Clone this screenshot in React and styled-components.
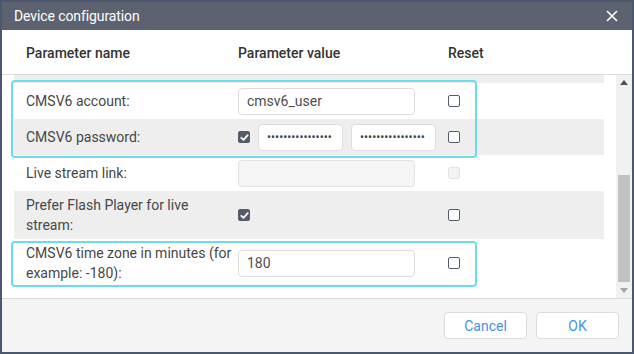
import React, { useLayoutEffect, useRef } from "react";
import styled, { createGlobalStyle } from "styled-components";

const GlobalStyle = createGlobalStyle`
  html, body { margin: 0; padding: 0; background: #ffffff; }
  body { font-family: Roboto, "Liberation Sans", sans-serif; }
  * { box-sizing: border-box; }
`;

const Window = styled.div`
  width: 634px;
  height: 354px;
  border: 2px solid #4b5870;
  display: flex;
  flex-direction: column;
  background: #fff;
  overflow: hidden;
`;

const TitleBar = styled.div`
  height: 28px;
  flex: none;
  background: #5c626f;
  display: flex;
  align-items: center;
  justify-content: space-between;
  padding: 0 14px 0 12px;
`;

const Title = styled.div`
  color: #ffffff;
  font-size: 14px;
  letter-spacing: -0.1px;
`;

const CloseButton = styled.button`
  border: none;
  background: transparent;
  padding: 0;
  width: 12px;
  height: 12px;
  display: flex;
  cursor: pointer;
`;

const columns = "212px 210px 1fr";

const HeadRow = styled.div`
  flex: none;
  height: 45px;
  display: grid;
  grid-template-columns: ${columns};
  align-items: center;
  padding: 0 0 0 24px;
  border-bottom: 1px solid #dadada;
`;

const HeadCell = styled.div`
  font-size: 14px;
  font-weight: 500;
  color: #333;
  padding-top: 1px;
`;

const ScrollArea = styled.div`
  flex: 1;
  display: flex;
  min-height: 0;
`;

const Viewport = styled.div`
  flex: 1;
  overflow: hidden;
  padding: 0 12px;
`;

const List = styled.div`
  display: flex;
  flex-direction: column;
  padding-bottom: 11px;
`;

const Group = styled.div`
  position: relative;
  display: flex;
  flex-direction: column;
  &::after {
    content: "";
    position: absolute;
    left: -3px;
    right: 127px;
    top: ${(p) => p.$top}px;
    bottom: ${(p) => p.$bottom}px;
    border: 2px solid #6adcef;
    border-radius: 4px;
    pointer-events: none;
  }
`;

const Row = styled.div`
  display: grid;
  grid-template-columns: ${columns};
  align-items: center;
  min-height: ${(p) => (p.$tall ? 48 : 36)}px;
  padding-left: 12px;
  background: ${(p) => (p.$shaded ? "#eeeeee" : "#ffffff")};
`;

const Label = styled.div`
  font-size: 14px;
  line-height: 20px;
  color: #474747;
  padding-right: 5px;
`;

const ValueCell = styled.div`
  display: flex;
  align-items: center;
  gap: 8px;
`;

const ResetCell = styled.div`
  display: flex;
  align-items: center;
`;

const TextInput = styled.input`
  width: ${(p) => p.$w || 177}px;
  height: 27px;
  border: 1px solid #dddddd;
  border-radius: 4px;
  padding: 0 8px;
  font-family: Roboto, "Liberation Sans", sans-serif;
  font-size: 14px;
  color: #4d4d4d;
  background: #ffffff;
  outline: none;
  &:disabled {
    background: #f5f5f5;
    border-color: #e2e2e2;
  }
`;

const PasswordInput = styled(TextInput)`
  font-size: 12px;
  letter-spacing: 0;
  color: #3d4250;
  padding: 0 4px 0 8px;
`;

const Box = styled.span`
  width: 12px;
  height: 12px;
  border-radius: 2px;
  display: inline-flex;
  align-items: center;
  justify-content: center;
  flex: none;
  background: ${(p) => (p.$checked ? "#555c69" : p.$disabled ? "#f3f3f3" : "#ffffff")};
  border: 1.5px solid ${(p) => (p.$checked ? "#555c69" : p.$disabled ? "#e4e4e4" : "#555c69")};
`;

const Checkbox = ({ checked, disabled }) => (
  <Box $checked={checked} $disabled={disabled}>
    {checked && (
      <svg width="9" height="9" viewBox="0 0 9 9">
        <path d="M1.3 4.8 L3.5 6.8 L7.7 2.2" fill="none" stroke="#fff" strokeWidth="1.8" strokeLinecap="round" strokeLinejoin="round" />
      </svg>
    )}
  </Box>
);

const ScrollBar = styled.div`
  width: 16px;
  flex: none;
  background: #f1f1f1;
  display: flex;
  flex-direction: column;
`;

const ArrowButton = styled.div`
  height: 15px;
  flex: none;
  display: flex;
  align-items: center;
  justify-content: center;
`;

const Track = styled.div`
  flex: 1;
  display: flex;
  flex-direction: column;
`;

const Thumb = styled.div`
  margin: auto 2px 1px;
  height: 107px;
  background: #c1c1c1;
`;

const Footer = styled.div`
  flex: none;
  height: 54px;
  border-top: 1px solid #dadada;
  background: #f4f4f4;
  display: flex;
  justify-content: flex-end;
  align-items: flex-start;
  gap: 9px;
  padding: 13px 13px 0 0;
`;

const Button = styled.button`
  width: 83px;
  height: 27px;
  border: 1px solid #dcdcdc;
  border-radius: 4px;
  background: #ffffff;
  color: #4a90e2;
  font-family: Roboto, "Liberation Sans", sans-serif;
  font-size: 14px;
  cursor: pointer;
`;

export default function App() {
  const viewportRef = useRef(null);
  useLayoutEffect(() => {
    const el = viewportRef.current;
    if (el) el.scrollTop = el.scrollHeight;
  }, []);

  return (
    <>
      <GlobalStyle />
      <Window>
        <TitleBar>
          <Title>Device configuration</Title>
          <CloseButton aria-label="Close">
            <svg width="12" height="12" viewBox="0 0 12 12">
              <path d="M1 1 L11 11 M11 1 L1 11" stroke="#fff" strokeWidth="1.6" />
            </svg>
          </CloseButton>
        </TitleBar>
        <HeadRow>
          <HeadCell>Parameter name</HeadCell>
          <HeadCell>Parameter value</HeadCell>
          <HeadCell>Reset</HeadCell>
        </HeadRow>
        <ScrollArea>
          <Viewport ref={viewportRef}>
            <List>
              <Row $shaded $tall aria-hidden="true" />
              <Group $top={-3} $bottom={-3}>
                <Row>
                  <Label>CMSV6 account:</Label>
                  <ValueCell>
                    <TextInput defaultValue="cmsv6_user" />
                  </ValueCell>
                  <ResetCell>
                    <Checkbox />
                  </ResetCell>
                </Row>
                <Row $shaded>
                  <Label>CMSV6 password:</Label>
                  <ValueCell>
                    <Checkbox checked />
                    <PasswordInput type="password" $w={85} defaultValue="cmsv6password123" />
                    <PasswordInput type="password" $w={85} defaultValue="cmsv6password123" />
                  </ValueCell>
                  <ResetCell>
                    <Checkbox />
                  </ResetCell>
                </Row>
              </Group>
              <Row>
                <Label>Live stream link:</Label>
                <ValueCell>
                  <TextInput disabled defaultValue="" />
                </ValueCell>
                <ResetCell>
                  <Checkbox disabled />
                </ResetCell>
              </Row>
              <Row $shaded $tall>
                <Label>Prefer Flash Player for live stream:</Label>
                <ValueCell>
                  <Checkbox checked />
                </ValueCell>
                <ResetCell>
                  <Checkbox />
                </ResetCell>
              </Row>
              <Group $top={2} $bottom={0}>
                <Row $tall>
                  <Label>CMSV6 time zone in minutes (for example: -180):</Label>
                  <ValueCell>
                    <TextInput defaultValue="180" />
                  </ValueCell>
                  <ResetCell>
                    <Checkbox />
                  </ResetCell>
                </Row>
              </Group>
            </List>
          </Viewport>
          <ScrollBar>
            <ArrowButton>
              <svg width="8" height="5" viewBox="0 0 8 5">
                <path d="M0 5 L4 0 L8 5 Z" fill="#505050" />
              </svg>
            </ArrowButton>
            <Track>
              <Thumb />
            </Track>
            <ArrowButton>
              <svg width="8" height="5" viewBox="0 0 8 5">
                <path d="M0 0 L8 0 L4 5 Z" fill="#a3a3a3" />
              </svg>
            </ArrowButton>
          </ScrollBar>
        </ScrollArea>
        <Footer>
          <Button>Cancel</Button>
          <Button>OK</Button>
        </Footer>
      </Window>
    </>
  );
}
